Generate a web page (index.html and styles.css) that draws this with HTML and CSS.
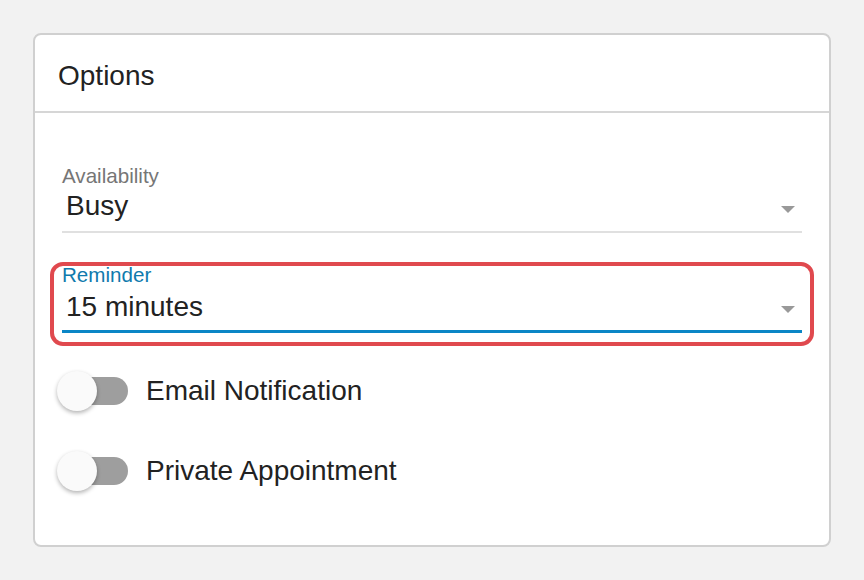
FILE: index.html
```html
<!DOCTYPE html>
<html lang="en">
<head>
<meta charset="utf-8">
<title>Options</title>
<link rel="stylesheet" href="styles.css">
</head>
<body>
<div class="card">
  <div class="card-header">Options</div>
  <div class="card-body">
    <div class="field">
      <div class="field-label">Availability</div>
      <div class="field-value">
        <span class="value-text">Busy</span>
        <span class="arrow"></span>
      </div>
    </div>
    <div class="field field-focused">
      <div class="field-label">Reminder</div>
      <div class="field-value">
        <span class="value-text">15 minutes</span>
        <span class="arrow"></span>
      </div>
      <div class="focus-ring"></div>
    </div>
    <div class="toggle-row toggle-first">
      <div class="toggle"><div class="track"></div><div class="knob"></div></div>
      <span class="toggle-label">Email Notification</span>
    </div>
    <div class="toggle-row">
      <div class="toggle"><div class="track"></div><div class="knob"></div></div>
      <span class="toggle-label">Private Appointment</span>
    </div>
  </div>
</div>
</body>
</html>
```
FILE: styles.css
```css
html, body {
  margin: 0;
  padding: 0;
}
body {
  background: #f2f2f2;
  font-family: "Liberation Sans", Arial, sans-serif;
  color: #222222;
  padding: 33px;
}
.card {
  background: #ffffff;
  border: 2px solid #d0d0d0;
  border-radius: 8px;
  height: 510px;
  box-sizing: content-box;
}
.card-header {
  font-size: 28px;
  line-height: 32px;
  padding: 25px 23px 19px;
  border-bottom: 2px solid #d6d6d6;
}
.card-body {
  padding: 51px 27px 54px;
}
.field {
  position: relative;
}
.field-label {
  font-size: 20.6px;
  line-height: 23px;
  color: #767676;
}
.field-value {
  display: flex;
  align-items: flex-end;
  justify-content: space-between;
  font-size: 28px;
  line-height: 32px;
  margin-top: 3px;
  padding: 0 7px 9px 4px;
  border-bottom: 2px solid #e0e0e0;
}
.arrow {
  width: 0;
  height: 0;
  border-left: 7px solid transparent;
  border-right: 7px solid transparent;
  border-top: 7px solid #999999;
  margin-bottom: 9px;
}
.field-focused {
  margin-top: 30px;
}
.field-focused .field-label {
  color: #0f7aad;
}
.field-focused .field-value {
  margin-top: 5px;
  padding-bottom: 7px;
  border-bottom: 3px solid #0a86c6;
}
.field-focused .arrow {
  margin-bottom: 10px;
}
.focus-ring {
  position: absolute;
  top: -1px;
  left: -12px;
  right: -12px;
  bottom: -13px;
  border: 4px solid #e0494e;
  border-radius: 13px;
  pointer-events: none;
}
.toggle-row {
  display: flex;
  align-items: center;
  margin-left: -5px;
  margin-top: 40px;
  height: 40px;
}
.toggle-first {
  margin-top: 38px;
}
.toggle {
  position: relative;
  width: 71px;
  height: 40px;
  flex: none;
  display: flex;
  align-items: center;
}
.track {
  margin-left: 5px;
  width: 66px;
  height: 28px;
  border-radius: 14px;
  background: #9e9e9e;
}
.knob {
  position: absolute;
  left: 0;
  top: 0;
  width: 40px;
  height: 40px;
  border-radius: 50%;
  background: #fafafa;
  box-shadow: 0 2px 4px rgba(0, 0, 0, 0.3);
}
.toggle-label {
  font-size: 28px;
  line-height: 32px;
  margin-left: 18px;
}
```
